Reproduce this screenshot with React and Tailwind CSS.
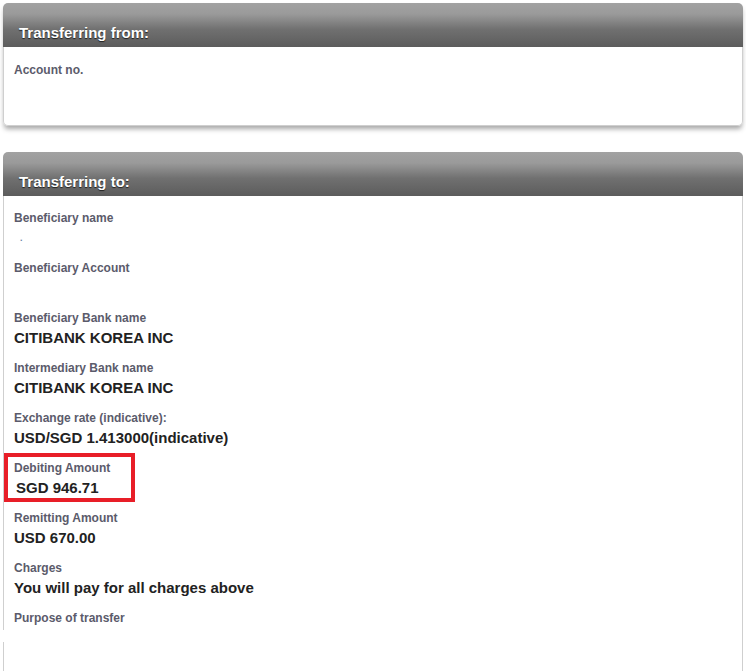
import React from 'react';

const FONT = { fontFamily: '"Liberation Sans", Arial, sans-serif' };

function PanelHeader({ title }) {
  return (
    <div className="h-[44px] rounded-t-[5px] bg-[linear-gradient(#a2a2a2,#9a9a9a_25%,#707070_60%,#5c5c5c)] px-[16px] pt-[21px]">
      <span className="block text-[15px] font-bold leading-[18px] text-white [text-shadow:0_1px_1px_rgba(0,0,0,0.7)]">
        {title}
      </span>
    </div>
  );
}

function Field({ label, value, highlight, dot }) {
  return (
    <div className="relative mb-[10px]">
      <div className="h-[20px] text-[12px] font-bold leading-[20px] text-[#5b5b6b]">{label}</div>
      <div className={`h-[20px] text-[15px] font-bold leading-[20px] text-[#222] ${highlight ? 'pl-[2px]' : ''}`}>
        {dot ? <span className="ml-[6px] text-[9px] leading-[20px] text-[#6b7fa6] align-top">.</span> : value}
      </div>
      {highlight && (
        <div className="pointer-events-none absolute left-[-10px] top-[-5px] h-[49px] w-[131px] border-[4px] border-[#e81e28]" />
      )}
    </div>
  );
}

const fields = [
  { label: 'Beneficiary name', dot: true },
  { label: 'Beneficiary Account', value: '' },
  { label: 'Beneficiary Bank name', value: 'CITIBANK KOREA INC' },
  { label: 'Intermediary Bank name', value: 'CITIBANK KOREA INC' },
  { label: 'Exchange rate (indicative):', value: 'USD/SGD 1.413000(indicative)' },
  { label: 'Debiting Amount', value: 'SGD 946.71', highlight: true },
  { label: 'Remitting Amount', value: 'USD 670.00' },
  { label: 'Charges', value: 'You will pay for all charges above' },
];

export default function App() {
  return (
    <div className="min-h-[671px] bg-white pt-[3px]" style={FONT}>
      <section className="mx-[3px] rounded-[5px] shadow-[0_4px_5px_-1px_rgba(0,0,0,0.35)]">
        <PanelHeader title="Transferring from:" />
        <div className="h-[79px] rounded-b-[5px] border-x border-b border-[#cfcfcf] bg-white px-[10px] pt-[13px]">
          <div className="h-[20px] text-[12px] font-bold leading-[20px] text-[#5b5b6b]">Account no.</div>
        </div>
      </section>

      <section className="mx-[3px] mt-[26px]">
        <PanelHeader title="Transferring to:" />
        <div className="border-x border-[#cfcfcf] bg-white px-[10px] pt-[12px] pb-[2px]">
          {fields.map((f) => (
            <Field key={f.label} {...f} />
          ))}
          <div className="h-[20px] text-[12px] font-bold leading-[20px] text-[#5b5b6b]">Purpose of transfer</div>
        </div>
        <div className="h-[12px] border-r border-[#cfcfcf]" />
        <div className="h-[40px] border-x border-[#cfcfcf]" />
      </section>
    </div>
  );
}
